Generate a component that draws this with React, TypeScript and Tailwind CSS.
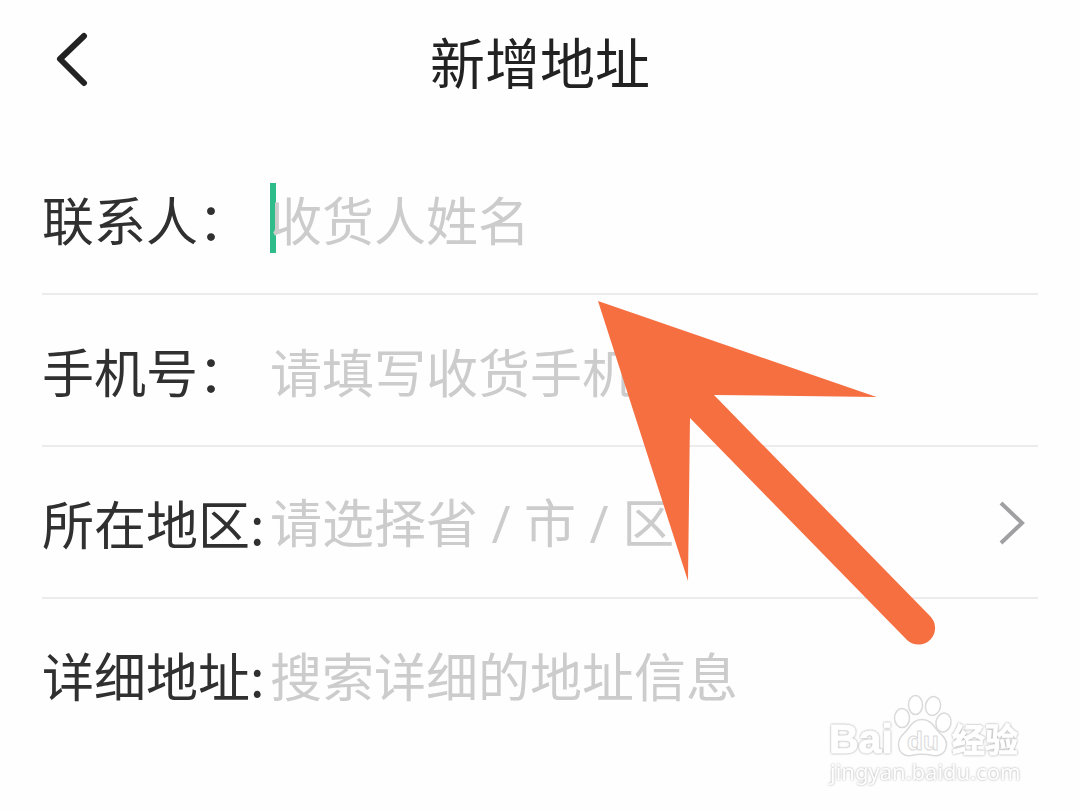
import React, { useState } from 'react';

interface FieldRowProps {
  id: string;
  label: string;
  last?: boolean;
  children: React.ReactNode;
}

const inputClass =
  'relative w-full min-w-0 bg-transparent text-[52px] leading-[76px] text-[#303030] placeholder:text-[#cccccc] placeholder:opacity-100 caret-[#2ebd8a] focus:outline-none';

const FieldRow: React.FC<FieldRowProps> = ({ id, label, last, children }) => (
  <div className={last ? 'flex items-center pt-[38px] pb-9' : 'flex items-center border-b-2 border-[#ececec] pt-[38px] pb-9'}>
    <label htmlFor={id} className="w-[228px] shrink-0 whitespace-nowrap text-[52px] leading-[76px] text-[#303030]">
      {label}
    </label>
    {children}
  </div>
);

const PointerArrow: React.FC = () => (
  <svg className="pointer-events-none absolute top-[300px] left-[597px]" width="340" height="346" viewBox="597 300 340 346" fill="#f66f40" aria-hidden="true">
    <path d="M598 301 L876.500 397 L714 395 L930 616 A16.500 16.500 0 0 1 907 640 L690 418 L688 581 Z" />
  </svg>
);

const Watermark: React.FC = () => (
  <svg className="pointer-events-none absolute top-[690px] left-[824px]" width="204" height="100" viewBox="824 690 204 100" fill="#ffffff" strokeLinejoin="round" aria-hidden="true">
    <g stroke="#ffffff" strokeWidth="1" className="drop-shadow-[0_0_1px_#a0a0a0]">
      <text x="829" y="753" fontSize="41" fontWeight="700" fontFamily="'Liberation Sans', sans-serif">Bai</text>
      <text x="952" y="752" fontSize="33" fontWeight="700" fontFamily="'Noto Sans CJK SC', sans-serif">经验</text>
    </g>
    <text x="830" y="780" fontSize="22" fontFamily="'Noto Sans', sans-serif" className="drop-shadow-[0_0_1px_#a8a8a8]">jingyan.baidu.com</text>
    <g stroke="#dadada" strokeWidth="1.500">
      <ellipse cx="902" cy="718" rx="7.500" ry="9.500" />
      <ellipse cx="915.500" cy="705" rx="7" ry="9.500" />
      <ellipse cx="933" cy="706" rx="7.500" ry="9.500" transform="rotate(12 933 706)" />
      <ellipse cx="943.500" cy="722.500" rx="7.500" ry="9.500" transform="rotate(12 943.500 722.500)" />
      <path d="M922 719.500 C914 719.500 911 725 907 730 C903 735 898 738 898.500 745 C899 753 904 756.500 911 755.500 C918 754 926 754 933 755.500 C941 757 946 752 946.500 745 C947 738 941 735 937 730 C933 725 930 719.500 922 719.500 Z" />
      <text x="907" y="750" fontSize="26" strokeWidth="1" fontWeight="700" fontFamily="'Liberation Sans', sans-serif">du</text>
    </g>
  </svg>
);

const App: React.FC = () => {
  const [name, setName] = useState<string>('');
  const [mobile, setMobile] = useState<string>('');
  const [address, setAddress] = useState<string>('');

  return (
    <div className="relative min-h-screen overflow-hidden bg-[#fefefe] font-['Noto_Sans_CJK_SC',sans-serif]">
      <header className="grid grid-cols-[1fr_auto_1fr] items-center px-[42px] pt-5 pb-[43px]">
        <button type="button" aria-label="返回" className="flex w-[60px] items-center justify-center">
          <svg width="32" height="56" viewBox="0 0 32 56" fill="none" stroke="#222222" strokeWidth="6" strokeLinecap="round" strokeLinejoin="round">
            <path d="M28 4 L4 27 L28 51" />
          </svg>
        </button>
        <h1 className="text-[55px] leading-[80px] text-[#222222]">新增地址</h1>
      </header>

      <form className="px-[42px]" onSubmit={(e) => e.preventDefault()}>
        <FieldRow id="name" label="联系人：">
          <div className="relative flex-1">
            <span className="absolute top-0.5 left-0 h-[70px] w-1.5 bg-[#2ebd8a]" />
            <input id="name" type="text" value={name} onChange={(e) => setName(e.target.value)} placeholder="收货人姓名" className={inputClass} />
          </div>
        </FieldRow>
        <FieldRow id="mobile" label="手机号：">
          <input id="mobile" type="tel" value={mobile} onChange={(e) => setMobile(e.target.value)} placeholder="请填写收货手机号" className={inputClass} />
        </FieldRow>
        <FieldRow id="region" label="所在地区:">
          <button id="region" type="button" className="flex flex-1 items-center justify-between pr-3 font-['Open_Sans','Noto_Sans_CJK_SC',sans-serif] text-[52px] leading-[76px] text-[#cccccc]">
            <span>请选择省 / 市 / 区</span>
            <svg width="28" height="48" viewBox="0 0 28 48" fill="none" stroke="#a0a0a2" strokeWidth="4">
              <path d="M3 4 L24 24 L3 44" />
            </svg>
          </button>
        </FieldRow>
        <FieldRow id="address" label="详细地址:" last>
          <input id="address" type="text" value={address} onChange={(e) => setAddress(e.target.value)} placeholder="搜索详细的地址信息" className={inputClass} />
        </FieldRow>
      </form>

      <PointerArrow />
      <Watermark />
    </div>
  );
};

export default App;
